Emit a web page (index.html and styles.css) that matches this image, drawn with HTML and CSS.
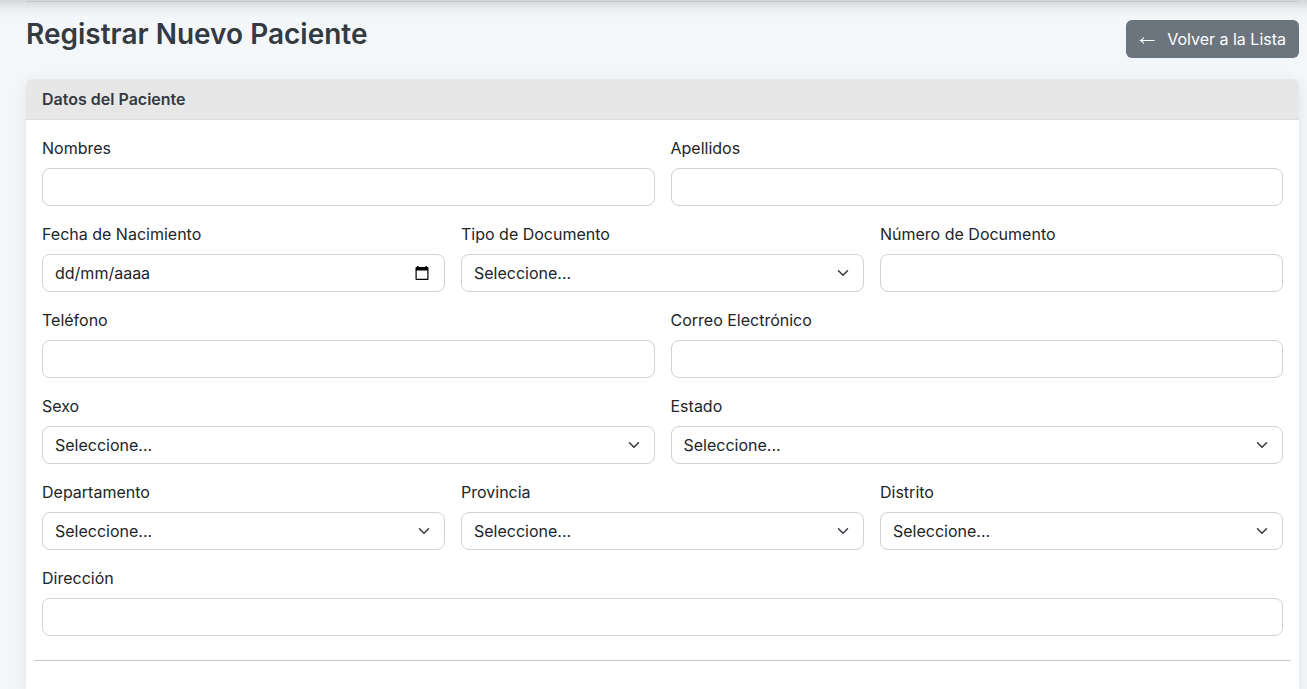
FILE: index.html
```html
<!DOCTYPE html>
<html lang="es">
<head>
<meta charset="utf-8">
<meta name="viewport" content="width=device-width, initial-scale=1">
<title>Registrar Nuevo Paciente</title>
<link rel="stylesheet" href="styles.css">
</head>
<body>
<main class="page">
  <header class="page-header">
    <h1 class="page-title">Registrar Nuevo Paciente</h1>
    <a class="btn-back" href="#">
      <svg class="arrow" viewBox="0 0 16 16" aria-hidden="true"><path d="M15.500 9.500H1.500"/><path class="arrow-head" d="M4.800 6Q3.200 8.400.5 9.500Q3.200 10.600 4.800 13L5.300 12.500Q4.200 10.600 3 9.500Q4.200 8.400 5.300 6.500z"/></svg>
      <span>Volver a la Lista</span>
    </a>
  </header>
  <section class="card">
    <h2 class="card-header">Datos del Paciente</h2>
    <form class="card-body">
      <div class="row">
        <div class="field half"><label for="nombres">Nombres</label><input class="control" id="nombres" type="text"></div>
        <div class="field half"><label for="apellidos">Apellidos</label><input class="control" id="apellidos" type="text"></div>
        <div class="field third">
          <label for="fecha">Fecha de Nacimiento</label>
          <div class="date">
            <input class="control" id="fecha" type="text" placeholder="dd/mm/aaaa">
            <button class="date-button" type="button" aria-label="Abrir calendario">
              <svg class="calendar" viewBox="0 0 14 14" aria-hidden="true"><path fill-rule="evenodd" d="M2 0h1.500v1h7V0H12v1h.5q1 0 1 1v11q0 1-1 1h-11q-1 0-1-1V2q0-1 1-1H2zM1.700 4.500v8.300h10.600V4.500z"/></svg>
            </button>
          </div>
        </div>
        <div class="field third"><label for="tipo">Tipo de Documento</label><div class="select"><select class="control" id="tipo"><option>Seleccione...</option></select><svg class="chevron" viewBox="0 0 16 16" aria-hidden="true"><path d="m2 5 6 6 6-6"/></svg></div></div>
        <div class="field third"><label for="numero">Número de Documento</label><input class="control" id="numero" type="text"></div>
        <div class="field half"><label for="telefono">Teléfono</label><input class="control" id="telefono" type="tel"></div>
        <div class="field half"><label for="correo">Correo Electrónico</label><input class="control" id="correo" type="email"></div>
        <div class="field half"><label for="sexo">Sexo</label><div class="select"><select class="control" id="sexo"><option>Seleccione...</option></select><svg class="chevron" viewBox="0 0 16 16" aria-hidden="true"><path d="m2 5 6 6 6-6"/></svg></div></div>
        <div class="field half"><label for="estado">Estado</label><div class="select"><select class="control" id="estado"><option>Seleccione...</option></select><svg class="chevron" viewBox="0 0 16 16" aria-hidden="true"><path d="m2 5 6 6 6-6"/></svg></div></div>
        <div class="field third"><label for="departamento">Departamento</label><div class="select"><select class="control" id="departamento"><option>Seleccione...</option></select><svg class="chevron" viewBox="0 0 16 16" aria-hidden="true"><path d="m2 5 6 6 6-6"/></svg></div></div>
        <div class="field third"><label for="provincia">Provincia</label><div class="select"><select class="control" id="provincia"><option>Seleccione...</option></select><svg class="chevron" viewBox="0 0 16 16" aria-hidden="true"><path d="m2 5 6 6 6-6"/></svg></div></div>
        <div class="field third"><label for="distrito">Distrito</label><div class="select"><select class="control" id="distrito"><option>Seleccione...</option></select><svg class="chevron" viewBox="0 0 16 16" aria-hidden="true"><path d="m2 5 6 6 6-6"/></svg></div></div>
        <div class="field full"><label for="direccion">Dirección</label><input class="control" id="direccion" type="text"></div>
      </div>
      <hr class="divider">
    </form>
  </section>
</main>
</body>
</html>
```

FILE: styles.css
```css
* { box-sizing: border-box; }

body {
  margin: 0;
  background: #f3f7fa;
  color: #212529;
  font: 400 16px/24px Inter, sans-serif;
}

.page {
  display: flex;
  flex-direction: column;
  min-height: 100vh;
  padding: 1px 8px 0 26px;
  background: linear-gradient(#d2d6d8, #dfe3e5 5px, #ebeff2 10px, #f3f7fa 18px) top / 100% 18px no-repeat;
}

.page-header {
  display: flex;
  align-items: flex-start;
  justify-content: space-between;
  padding: 15px 0 21px;
  border-top: 1px solid #c3c8cb;
}

.page-title {
  margin: 0;
  color: #343a40;
  font-size: 28px;
  font-weight: 600;
  line-height: 34px;
}

.btn-back {
  display: flex;
  align-items: center;
  gap: 12px;
  margin-top: 3px;
  padding: 7px 13px;
  border-radius: 6px;
  background: #6c757d;
  color: #fff;
  text-decoration: none;
}

.arrow {
  width: 16px;
  height: 16px;
  fill: none;
  stroke: currentColor;
}

.arrow-head {
  fill: currentColor;
  stroke: none;
}

.card {
  flex: 1;
  border-radius: 6px 6px 0 0;
  background: #fff;
  box-shadow: 0 4px 16px rgba(0, 0, 0, 0.08);
}

.card-header {
  margin: 0;
  padding: 8px 16px;
  border-bottom: 1px solid #dcdcdc;
  border-radius: 6px 6px 0 0;
  background: #e7e7e7;
  color: #343a40;
  font-size: 16px;
  font-weight: 600;
  line-height: 24px;
}

.card-body { padding: 16px 16px 0; }

.row {
  display: grid;
  grid-template-columns: repeat(6, 1fr);
  gap: 16px;
}

.field {
  display: flex;
  flex-direction: column;
  gap: 8px;
  min-width: 0;
}

.half { grid-column: span 3; }
.third { grid-column: span 2; }
.full { grid-column: 1 / -1; }

.control {
  display: block;
  width: 100%;
  height: 38px;
  padding: 6px 12px;
  border: 1px solid #ced2d6;
  border-radius: 8px;
  background: #fff;
  color: #212529;
  font: inherit;
  appearance: none;
}

.control::placeholder {
  color: #212529;
  opacity: 1;
}

.date,
.select { position: relative; }

.date-button {
  position: absolute;
  top: 12px;
  right: 16px;
  display: flex;
  padding: 0;
  border: 0;
  background: none;
  color: #000;
}

.calendar {
  width: 14px;
  height: 14px;
  fill: currentColor;
}

.chevron {
  position: absolute;
  top: 13px;
  right: 15px;
  width: 12px;
  height: 12px;
  fill: none;
  stroke: #343a40;
  stroke-width: 2;
  stroke-linecap: round;
  stroke-linejoin: round;
  pointer-events: none;
}

.divider {
  margin: 24px -8px;
  border: 0;
  border-top: 1px solid #c6c8ca;
}
```
